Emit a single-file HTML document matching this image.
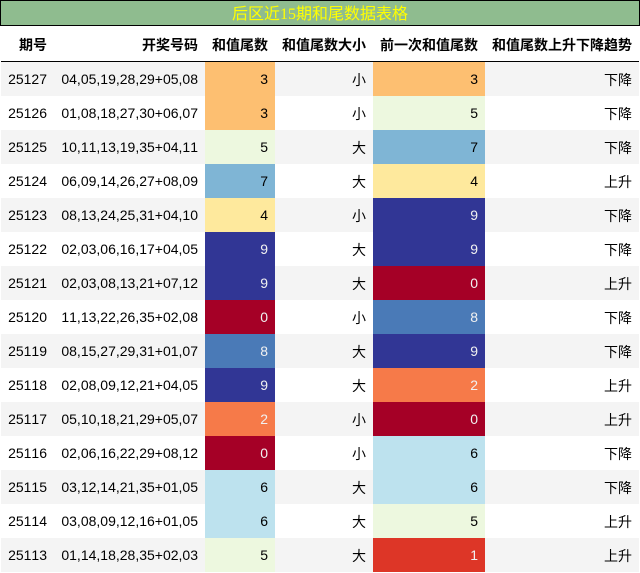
<!DOCTYPE html>
<html><head><meta charset="utf-8">
<style>
html,body{margin:0;padding:0;background:#fff;width:640px;height:573px;overflow:hidden}
body{font-family:"Liberation Sans","Noto Sans CJK SC",sans-serif;font-size:14px;color:#000;font-kerning:none}
.t{position:absolute;left:0;top:0;width:638px;height:24px;border:1px solid #000;background:#8fbc8f;color:#ff0;font-size:16px;line-height:27px;text-align:center;font-family:"Liberation Serif","Noto Sans CJK SC",serif}
table{position:absolute;left:1px;top:26px;width:638px;border-collapse:separate;border-spacing:0;table-layout:fixed}
th,td{padding:0 7px;text-align:right;white-space:nowrap;overflow:hidden;box-sizing:border-box}
th{height:36px;font-weight:bold;border-bottom:1px solid #000;line-height:32px;padding-top:3px;padding-bottom:0;vertical-align:top}
td{height:34px;line-height:34px;vertical-align:top}
td:nth-child(4),td:nth-child(6){padding-top:2px;line-height:32px}
tbody tr:nth-child(odd){background:#f4f4f4}
.c3{background:#fdbf71}.c5{background:#edf8df}.c7{background:#7fb5d5}.c4{background:#fee99d}
.c9{background:#313695;color:#f1f1f1}.c0{background:#a50026;color:#f1f1f1}.c8{background:#4a7ab7;color:#f1f1f1}
.c2{background:#f67a49;color:#f1f1f1}.c6{background:#bde2ee}.c1{background:#dd3627;color:#f1f1f1}
</style></head><body>
<div class="t">后区近15期和尾数据表格</div>
<table>
<colgroup><col style="width:53px"><col style="width:151px"><col style="width:70px"><col style="width:98px"><col style="width:112px"><col style="width:154px"></colgroup>
<thead><tr><th>期号</th><th>开奖号码</th><th>和值尾数</th><th>和值尾数大小</th><th>前一次和值尾数</th><th>和值尾数上升下降趋势</th></tr></thead>
<tbody>
<tr><td>25127</td><td>04,05,19,28,29+05,08</td><td class="c3">3</td><td>小</td><td class="c3">3</td><td>下降</td></tr>
<tr><td>25126</td><td>01,08,18,27,30+06,07</td><td class="c3">3</td><td>小</td><td class="c5">5</td><td>下降</td></tr>
<tr><td>25125</td><td>10,11,13,19,35+04,11</td><td class="c5">5</td><td>大</td><td class="c7">7</td><td>下降</td></tr>
<tr><td>25124</td><td>06,09,14,26,27+08,09</td><td class="c7">7</td><td>大</td><td class="c4">4</td><td>上升</td></tr>
<tr><td>25123</td><td>08,13,24,25,31+04,10</td><td class="c4">4</td><td>小</td><td class="c9">9</td><td>下降</td></tr>
<tr><td>25122</td><td>02,03,06,16,17+04,05</td><td class="c9">9</td><td>大</td><td class="c9">9</td><td>下降</td></tr>
<tr><td>25121</td><td>02,03,08,13,21+07,12</td><td class="c9">9</td><td>大</td><td class="c0">0</td><td>上升</td></tr>
<tr><td>25120</td><td>11,13,22,26,35+02,08</td><td class="c0">0</td><td>小</td><td class="c8">8</td><td>下降</td></tr>
<tr><td>25119</td><td>08,15,27,29,31+01,07</td><td class="c8">8</td><td>大</td><td class="c9">9</td><td>下降</td></tr>
<tr><td>25118</td><td>02,08,09,12,21+04,05</td><td class="c9">9</td><td>大</td><td class="c2">2</td><td>上升</td></tr>
<tr><td>25117</td><td>05,10,18,21,29+05,07</td><td class="c2">2</td><td>小</td><td class="c0">0</td><td>上升</td></tr>
<tr><td>25116</td><td>02,06,16,22,29+08,12</td><td class="c0">0</td><td>小</td><td class="c6">6</td><td>下降</td></tr>
<tr><td>25115</td><td>03,12,14,21,35+01,05</td><td class="c6">6</td><td>大</td><td class="c6">6</td><td>下降</td></tr>
<tr><td>25114</td><td>03,08,09,12,16+01,05</td><td class="c6">6</td><td>大</td><td class="c5">5</td><td>上升</td></tr>
<tr><td>25113</td><td>01,14,18,28,35+02,03</td><td class="c5">5</td><td>大</td><td class="c1">1</td><td>上升</td></tr>
</tbody></table>
</body></html>
